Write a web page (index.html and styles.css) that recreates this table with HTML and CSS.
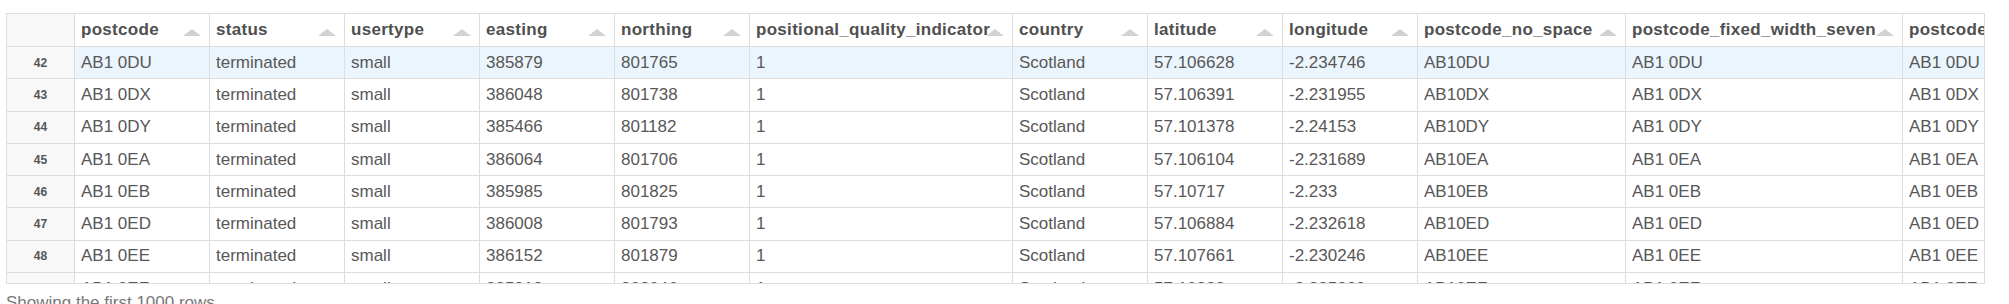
FILE: index.html
```html
<!DOCTYPE html>
<html>
<head>
<meta charset="utf-8">
<link rel="stylesheet" href="styles.css">
</head>
<body>
<div class="page">
  <div class="scroller">
    <table class="grid">
      <colgroup>
        <col class="c-idx"><col class="c-std"><col class="c-std"><col class="c-std"><col class="c-std"><col class="c-std"><col class="c-pqi"><col class="c-std"><col class="c-std"><col class="c-std"><col class="c-nospace"><col class="c-fixed"><col class="c-std">
      </colgroup>
      <thead>
        <tr>
          <th class="idx"></th>
          <th><span class="label">postcode</span><i class="sort"></i></th>
          <th><span class="label">status</span><i class="sort"></i></th>
          <th><span class="label">usertype</span><i class="sort"></i></th>
          <th><span class="label">easting</span><i class="sort"></i></th>
          <th><span class="label">northing</span><i class="sort"></i></th>
          <th><span class="label">positional_quality_indicator</span><i class="sort"></i></th>
          <th><span class="label">country</span><i class="sort"></i></th>
          <th><span class="label">latitude</span><i class="sort"></i></th>
          <th><span class="label">longitude</span><i class="sort"></i></th>
          <th><span class="label">postcode_no_space</span><i class="sort"></i></th>
          <th><span class="label">postcode_fixed_width_seven</span><i class="sort"></i></th>
          <th><span class="label">postcode_fixed_width_eight</span><i class="sort"></i></th>
        </tr>
      </thead>
      <tbody>
        <tr class="hl"><td class="idx">42</td><td>AB1 0DU</td><td>terminated</td><td>small</td><td>385879</td><td>801765</td><td>1</td><td>Scotland</td><td>57.106628</td><td>-2.234746</td><td>AB10DU</td><td>AB1 0DU</td><td>AB1 0DU</td></tr>
        <tr><td class="idx">43</td><td>AB1 0DX</td><td>terminated</td><td>small</td><td>386048</td><td>801738</td><td>1</td><td>Scotland</td><td>57.106391</td><td>-2.231955</td><td>AB10DX</td><td>AB1 0DX</td><td>AB1 0DX</td></tr>
        <tr><td class="idx">44</td><td>AB1 0DY</td><td>terminated</td><td>small</td><td>385466</td><td>801182</td><td>1</td><td>Scotland</td><td>57.101378</td><td>-2.24153</td><td>AB10DY</td><td>AB1 0DY</td><td>AB1 0DY</td></tr>
        <tr><td class="idx">45</td><td>AB1 0EA</td><td>terminated</td><td>small</td><td>386064</td><td>801706</td><td>1</td><td>Scotland</td><td>57.106104</td><td>-2.231689</td><td>AB10EA</td><td>AB1 0EA</td><td>AB1 0EA</td></tr>
        <tr><td class="idx">46</td><td>AB1 0EB</td><td>terminated</td><td>small</td><td>385985</td><td>801825</td><td>1</td><td>Scotland</td><td>57.10717</td><td>-2.233</td><td>AB10EB</td><td>AB1 0EB</td><td>AB1 0EB</td></tr>
        <tr><td class="idx">47</td><td>AB1 0ED</td><td>terminated</td><td>small</td><td>386008</td><td>801793</td><td>1</td><td>Scotland</td><td>57.106884</td><td>-2.232618</td><td>AB10ED</td><td>AB1 0ED</td><td>AB1 0ED</td></tr>
        <tr><td class="idx">48</td><td>AB1 0EE</td><td>terminated</td><td>small</td><td>386152</td><td>801879</td><td>1</td><td>Scotland</td><td>57.107661</td><td>-2.230246</td><td>AB10EE</td><td>AB1 0EE</td><td>AB1 0EE</td></tr>
        <tr><td class="idx">49</td><td>AB1 0EF</td><td>terminated</td><td>small</td><td>385913</td><td>802046</td><td>1</td><td>Scotland</td><td>57.10828</td><td>-2.235399</td><td>AB10EF</td><td>AB1 0EF</td><td>AB1 0EF</td></tr>
        <tr><td class="idx">50</td><td>AB1 0EG</td><td>terminated</td><td>small</td><td>386041</td><td>802134</td><td>1</td><td>Scotland</td><td>57.109075</td><td>-2.233291</td><td>AB10EG</td><td>AB1 0EG</td><td>AB1 0EG</td></tr>
      </tbody>
    </table>
  </div>
  <div class="footer">Showing the first 1000 rows</div>
</div>
</body>
</html>
```
FILE: styles.css
```css
html, body {
  margin: 0;
  padding: 0;
  background: #ffffff;
}

.page {
  padding: 13px 0 0 6px;
  font-family: "Liberation Sans", Arial, sans-serif;
  color: #555555;
}

.scroller {
  width: 1979px;
  height: 271px;
  box-sizing: border-box;
  border: 1px solid #dddddd;
  overflow: hidden;
}

.grid {
  border-collapse: separate;
  border-spacing: 0;
  table-layout: fixed;
  width: 2031px;
  font-size: 17px;
}

.c-idx { width: 68px; }
.c-std { width: 135px; }
.c-pqi { width: 263px; }
.c-nospace { width: 208px; }
.c-fixed { width: 277px; }

.grid th,
.grid td {
  box-sizing: border-box;
  border-right: 1px solid #dddddd;
  border-bottom: 1px solid #dddddd;
  padding: 0 0 0 6px;
  text-align: left;
  vertical-align: middle;
  white-space: nowrap;
  overflow: visible;
}

.grid thead tr {
  height: 33px;
}

.grid th {
  position: relative;
  font-weight: bold;
  color: #505050;
  background: #ffffff;
  letter-spacing: 0.3px;
}

.grid tbody tr {
  height: 32.3px;
}

.grid td {
  color: #585858;
  overflow: hidden;
}

.grid .idx {
  background: #f8f8f8;
  text-align: center;
  padding: 0;
  font-size: 12px;
  font-weight: bold;
  color: #555555;
  letter-spacing: 0;
}

.grid tr.hl td {
  background: #ebf5fd;
}

.grid tr.hl td.idx {
  background: #f8f8f8;
}

.sort {
  position: absolute;
  right: 8px;
  top: 15px;
  width: 0;
  height: 0;
  border-left: 9px solid transparent;
  border-right: 9px solid transparent;
  border-bottom: 7px solid #d2d2d2;
}

.footer {
  margin-top: 9px;
  font-size: 17px;
  color: #777777;
  line-height: 20px;
}
```
